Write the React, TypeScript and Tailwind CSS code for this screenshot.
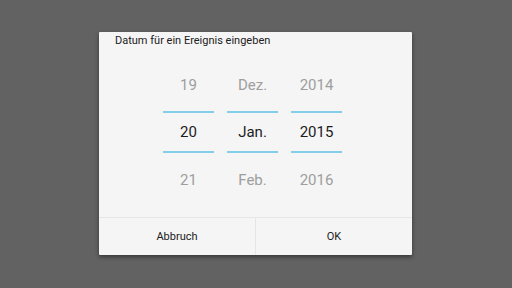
import React from "react";

const cols = [
  ["19", "20", "21"],
  ["Dez.", "Jan.", "Feb."],
  ["2014", "2015", "2016"],
];

export default function App() {
  return (
    <div
      className="w-[512px] h-[288px] bg-[#626262] pt-[32px] pl-[99px]"
      style={{ fontFamily: "Roboto, 'Liberation Sans', sans-serif" }}
    >
      <div className="w-[313px] h-[223px] bg-[#f5f5f5] flex flex-col shadow-[0_2px_4px_rgba(0,0,0,0.45)] rounded-[1px]">
        <div className="h-[17px] pt-[1px] pl-[16px] text-[11px] leading-[16px] text-[#212121]">
          Datum für ein Ereignis eingeben
        </div>
        <div className="flex justify-center gap-[13px] pr-[6px] pt-[11px] h-[168px]">
          {cols.map((c, i) => (
            <div key={i} className="w-[51px] flex flex-col text-[15px]">
              <div className="h-[48px] pt-[2px] flex items-center justify-center text-[#9e9e9e]">{c[0]}</div>
              <div className="mt-[3px] mb-[3px] h-[42px] pt-[1px] border-y-2 border-[#83cfea] flex items-center justify-center text-[#1c1c1c]">
                {c[1]}
              </div>
              <div className="h-[48px] flex items-center justify-center text-[#9e9e9e]">{c[2]}</div>
            </div>
          ))}
        </div>
        <div className="flex-1 flex border-t border-[#e6e6e6] text-[11px] text-[#212121]">
          <div className="flex-1 flex items-center justify-center pt-[2px] border-r border-[#e6e6e6]">Abbruch</div>
          <div className="flex-1 flex items-center justify-center pt-[2px]">OK</div>
        </div>
      </div>
    </div>
  );
}
